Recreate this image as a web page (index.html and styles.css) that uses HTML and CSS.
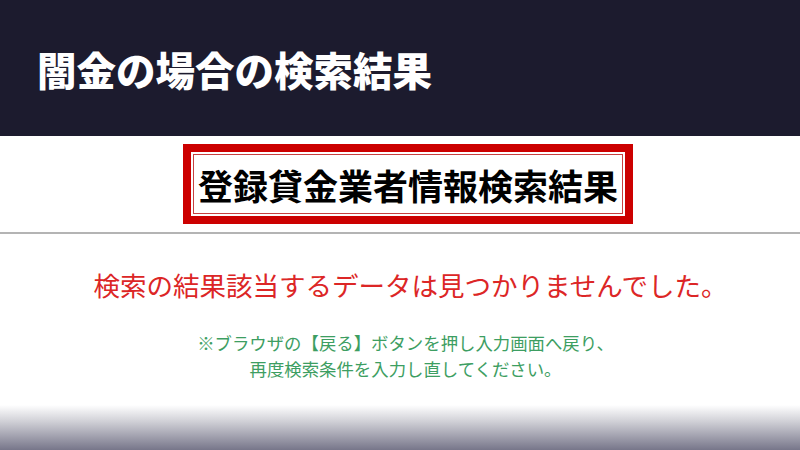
FILE: index.html
```html
<!DOCTYPE html>
<html lang="ja">
<head>
<meta charset="utf-8">
<link rel="stylesheet" href="styles.css">
</head>
<body>
<header class="hero">
  <h1 class="hero-title">闇金の場合の検索結果</h1>
</header>
<main class="result">
  <div class="banner-wrap">
    <div class="banner">
      <div class="banner-inner">登録貸金業者情報検索結果</div>
    </div>
  </div>
  <hr class="divider">
  <p class="notfound">検索の結果該当するデータは見つかりませんでした。</p>
  <p class="hint">※ブラウザの【戻る】ボタンを押し入力画面へ戻り、<br>再度検索条件を入力し直してください。</p>
</main>
<div class="fade"></div>
</body>
</html>
```

FILE: styles.css
```css
html, body {
  margin: 0;
  padding: 0;
  width: 800px;
  height: 450px;
  overflow: hidden;
  background: #ffffff;
  font-family: "Noto Sans CJK JP", "Noto Sans", sans-serif;
}

.hero {
  height: 136px;
  background: #1c1b2e;
  display: flex;
  align-items: center;
  padding-left: 37px;
  box-sizing: border-box;
}

.hero-title {
  margin: 0;
  color: #ffffff;
  font-size: 39.5px;
  font-weight: 900;
  letter-spacing: 0;
  line-height: 1;
  padding-top: 2px;
}

.result {
  height: 269px;
  display: flex;
  flex-direction: column;
  align-items: center;
}

.banner-wrap {
  padding-top: 8px;
  padding-left: 16px;
}

.banner {
  width: 450px;
  height: 80px;
  box-sizing: border-box;
  border: 8px solid #cc0000;
  padding: 2px;
  background: #ffffff;
}

.banner-inner {
  height: 100%;
  box-sizing: border-box;
  border: 1px solid #c84040;
  display: flex;
  align-items: center;
  justify-content: center;
  font-size: 35px;
  font-weight: 700;
  color: #000000;
  letter-spacing: 0;
}

.divider {
  align-self: stretch;
  margin: 8px 0 0 0;
  border: 0;
  border-top: 2px solid #b4b4b4;
  height: 0;
}

.notfound {
  margin: 33px 0 0 21px;
  font-size: 26.5px;
  line-height: 36px;
  color: #dc2626;
  font-weight: 400;
}

.hint {
  margin: 27px 0 0 11px;
  font-size: 17.4px;
  line-height: 26px;
  color: #3d9e62;
  text-align: center;
}

.fade {
  height: 45px;
  background: linear-gradient(to bottom, #ffffff 0%, #d2d2d8 35%, #77768a 100%);
}
```
